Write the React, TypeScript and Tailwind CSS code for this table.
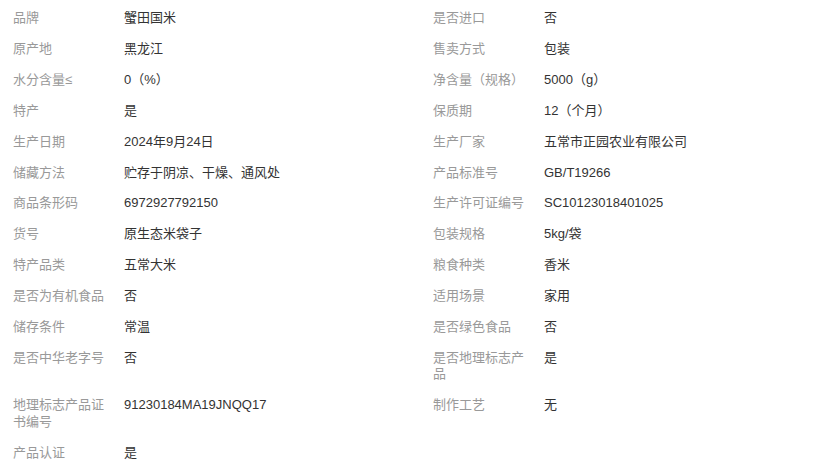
const specs: [string, string][] = [
  ['品牌', '蟹田国米'],
  ['是否进口', '否'],
  ['原产地', '黑龙江'],
  ['售卖方式', '包装'],
  ['水分含量≤', '0（%）'],
  ['净含量（规格）', '5000（g）'],
  ['特产', '是'],
  ['保质期', '12（个月）'],
  ['生产日期', '2024年9月24日'],
  ['生产厂家', '五常市正园农业有限公司'],
  ['储藏方法', '贮存于阴凉、干燥、通风处'],
  ['产品标准号', 'GB/T19266'],
  ['商品条形码', '6972927792150'],
  ['生产许可证编号', 'SC10123018401025'],
  ['货号', '原生态米袋子'],
  ['包装规格', '5kg/袋'],
  ['特产品类', '五常大米'],
  ['粮食种类', '香米'],
  ['是否为有机食品', '否'],
  ['适用场景', '家用'],
  ['储存条件', '常温'],
  ['是否绿色食品', '否'],
  ['是否中华老字号', '否'],
  ['是否地理标志产品', '是'],
  ['地理标志产品证书编号', '91230184MA19JNQQ17'],
  ['制作工艺', '无'],
  ['产品认证', '是'],
];

export default function App() {
  return (
    <div
      className="w-full bg-white pt-[3px] text-[13px] leading-[16.5px]"
      style={{ fontFamily: '"Liberation Sans", "Noto Sans CJK SC", sans-serif' }}
    >
      <div className="grid grid-cols-[420px_1fr]">
        {specs.map(([label, value]) => (
          <div key={label} className="flex py-[7.2px] pl-[13px]">
            <div className="w-[98px] shrink-0 mr-[13px] text-[#999999]">{label}</div>
            <div className="text-[#333333]">{value}</div>
          </div>
        ))}
      </div>
    </div>
  );
}
